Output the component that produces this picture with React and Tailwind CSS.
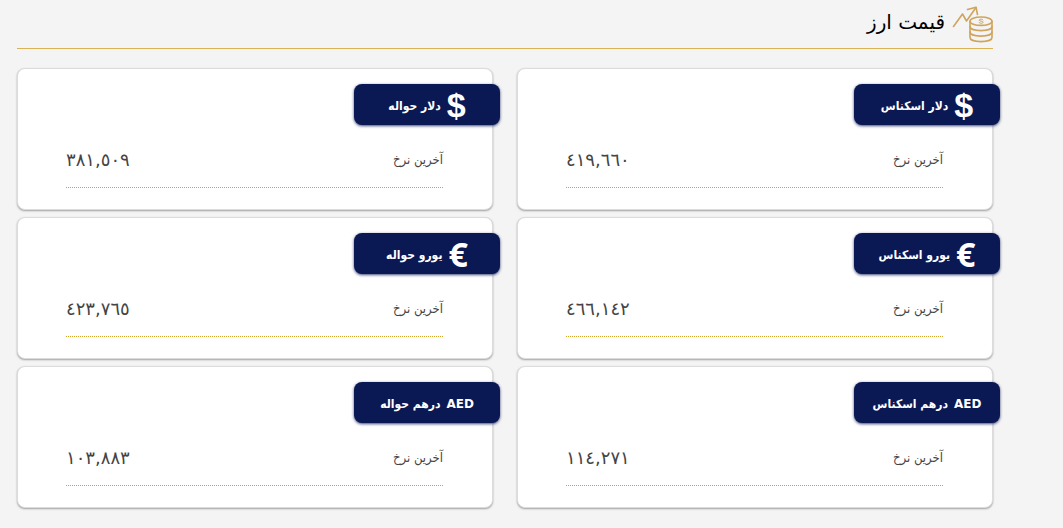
import React from 'react';

const rates = [
  { id: 'usd-cash', symbol: '$', name: 'دلار اسکناس', price: '٤١٩,٦٦٠' },
  { id: 'usd-wire', symbol: '$', name: 'دلار حواله', price: '٣٨١,٥٠٩' },
  { id: 'eur-cash', symbol: '€', name: 'یورو اسکناس', price: '٤٦٦,١٤٢' },
  { id: 'eur-wire', symbol: '€', name: 'یورو حواله', price: '٤٢٣,٧٦٥' },
  { id: 'aed-cash', symbol: 'AED', name: 'درهم اسکناس', price: '١١٤,٢٧١' },
  { id: 'aed-wire', symbol: 'AED', name: 'درهم حواله', price: '١٠٣,٨٨٣' },
];

const symbolStyles = {
  $: "font-['Liberation_Sans'] text-[34px]",
  '€': "font-['Open_Sans'] text-[34px]",
  AED: "font-['DejaVu_Sans'] text-xs pt-[3px]",
};

const CoinsIcon = () => (
  <svg width="41" height="38" viewBox="0 0 41 38" fill="none" stroke="#cfa45c" strokeWidth="1.6" strokeLinecap="round" strokeLinejoin="round" aria-hidden="true">
    <path d="M1.5 21.5 L10.5 9 L14.5 16 L24 2.5" />
    <path d="M15.5 4.5 L24 2.2 L25.5 9.5" />
    <ellipse cx="29" cy="16.2" rx="11" ry="4.2" />
    <path d="M18 16.2 V32.5 C18 38 40 38 40 32.5 V16.2" />
    <path d="M18 21.5 C18 27 40 27 40 21.5" />
    <path d="M18 27 C18 32.5 40 32.5 40 27" />
    <path d="M31 15 C30.5 13.8 27.2 13.8 27.2 15.2 C27.2 16.5 31.2 15.8 31.2 17.2 C31.2 18.6 27.5 18.6 27 17.4" strokeWidth="1" />
  </svg>
);

const RateCard = ({ rate }) => (
  <article className="bg-white rounded-lg border border-[#dcdcdc] shadow-[0_1px_2px_rgba(0,0,0,0.35)] pt-[15px] pb-[21px]">
    <h2 className="flex items-center justify-center gap-[6px] w-[146px] h-[41px] -ms-2 rounded-lg bg-[#0a1854] text-white font-bold shadow-[0_1px_3px_rgba(10,24,84,0.8)]">
      <span className={`leading-none ${symbolStyles[rate.symbol]}`}>{rate.symbol}</span>
      <span className="font-['DejaVu_Sans_Condensed','DejaVu_Sans',sans-serif] text-xs pt-[3px] whitespace-nowrap">{rate.name}</span>
    </h2>
    <dl className="flex items-center justify-between ms-[49px] me-12 mt-[14px] pb-[7px] h-[49px] border-b border-dotted border-[#d4a02a] text-[#444]">
      <dt className="font-['DejaVu_Sans_Condensed','DejaVu_Sans',sans-serif] text-[13px]">آخرین نرخ</dt>
      <dd className="text-lg">{rate.price}</dd>
    </dl>
  </article>
);

const App = () => (
  <div dir="rtl" lang="fa" className="min-h-screen bg-[#f4f4f4] ps-[70px] pe-[17px] pb-[18px] font-['DejaVu_Sans',sans-serif]">
    <header className="flex items-center gap-[7px] h-[49px] border-b border-[#d9b256]">
      <CoinsIcon />
      <h1 className="text-xl text-black pb-1">قیمت ارز</h1>
    </header>
    <main className="grid grid-cols-2 gap-x-6 gap-y-[7px] mt-[19px]">
      {rates.map((rate) => (
        <RateCard key={rate.id} rate={rate} />
      ))}
    </main>
  </div>
);

export default App;
